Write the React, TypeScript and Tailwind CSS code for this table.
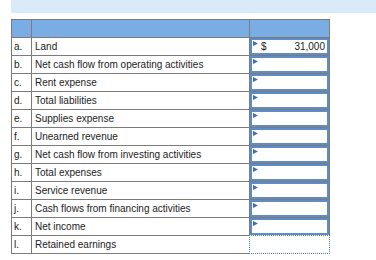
import React from "react";

const rows: { key: string; label: string; amount?: string }[] = [
  { key: "a.", label: "Land", amount: "31,000" },
  { key: "b.", label: "Net cash flow from operating activities" },
  { key: "c.", label: "Rent expense" },
  { key: "d.", label: "Total liabilities" },
  { key: "e.", label: "Supplies expense" },
  { key: "f.", label: "Unearned revenue" },
  { key: "g.", label: "Net cash flow from investing activities" },
  { key: "h.", label: "Total expenses" },
  { key: "i.", label: "Service revenue" },
  { key: "j.", label: "Cash flows from financing activities" },
  { key: "k.", label: "Net income" },
  { key: "l.", label: "Retained earnings" },
];

function Flag() {
  return (
    <svg className="absolute left-[1px] top-[1px]" width="5" height="5" viewBox="0 0 5 5">
      <polygon points="0,0 5,2.5 0,5" fill="#3a6fc0" />
    </svg>
  );
}

function AmountInput({ amount }: { amount?: string }) {
  return (
    <div className="relative h-full w-full border-2 border-[#5f8bc6] bg-white flex items-center">
      <Flag />
      {amount && (
        <>
          <span className="ml-[9px]">$</span>
          <span className="ml-auto mr-[2px]">{amount}</span>
        </>
      )}
    </div>
  );
}

export default function App() {
  return (
    <div
      className="w-[376px] h-[260px] bg-white text-[10px] leading-none text-[#1c1c1c]"
      style={{ fontFamily: '"Liberation Sans", Arial, sans-serif' }}
    >
      <div className="ml-[11px] h-[13px] bg-[#d9eaf8]" />
      <div className="ml-[11px] mt-[6px] w-[319px] grid grid-cols-[19px_217px_79px] auto-rows-[17px] gap-px p-px bg-[#7b7b7b]">
        <div className="bg-[#79ade4]" />
        <div className="bg-[#79ade4]" />
        <div className="bg-[#79ade4]" />
        {rows.map((r, i) => {
          const last = i === rows.length - 1;
          return (
            <React.Fragment key={r.key}>
              <div className="bg-white flex items-center pl-[2px]">{r.key}</div>
              <div className="bg-white flex items-center pl-[3px] whitespace-nowrap">{r.label}</div>
              {last ? (
                <div className="-m-px bg-white border border-dotted border-[#4f7fbd]" />
              ) : (
                <div className="bg-white">
                  <AmountInput amount={r.amount} />
                </div>
              )}
            </React.Fragment>
          );
        })}
      </div>
    </div>
  );
}
